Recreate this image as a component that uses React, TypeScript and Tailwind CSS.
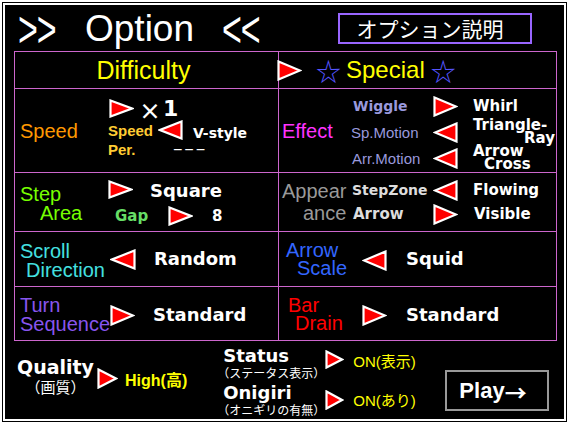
import React from "react";

const SANS = "font-['Liberation_Sans','Noto_Sans_CJK_JP',sans-serif]";
const BOLD = "font-['DejaVu_Sans','Noto_Sans_CJK_JP',sans-serif] font-bold";
const CJK = "font-['Noto_Sans_CJK_JP',sans-serif]";

function Tri({ dir = "r", w = 25, h = 21, className = "" }: { dir?: "r" | "l"; w?: number; h?: number; className?: string }) {
  const pts =
    dir === "r"
      ? `1.5,1.5 ${w - 2},${h / 2} 1.5,${h - 1.5}`
      : `${w - 1.5},1.5 2,${h / 2} ${w - 1.5},${h - 1.5}`;
  return (
    <svg width={w} height={h} viewBox={`0 0 ${w} ${h}`} className={`shrink-0 ${className}`}>
      <polygon points={pts} fill="#ff0000" stroke="#ffffff" strokeWidth="2.2" strokeLinejoin="miter" strokeMiterlimit={3} />
    </svg>
  );
}

export default function App() {
  return (
    <div className={`h-[425px] w-[569px] bg-white px-[2px] pb-[3px] pt-[2px] ${SANS}`}>
      <div className="h-full w-full bg-black p-px">
        <div className="flex h-full w-full flex-col border-2 border-white bg-black">
          {/* title row */}
          <div className="flex h-[46px] shrink-0 items-center pl-[13px]">
            <div className="flex h-[46px] w-[67px] items-center">
              <span className="inline-block origin-center scale-y-[1.55] text-[34px] leading-[30px] tracking-[-1px] text-white">&gt;&gt;</span>
            </div>
            <div className="w-[137px] text-[37px] leading-none text-white">Option</div>
            <div className="flex h-[46px] w-[116px] items-center">
              <span className="inline-block origin-center scale-y-[1.55] text-[34px] leading-[30px] tracking-[-1px] text-white">&lt;&lt;</span>
            </div>
            <div className={`flex h-[31px] w-[194px] items-center justify-center border-2 border-[#9966ff] pr-[10px] text-[21px] leading-none text-white ${CJK}`}>
              オプション説明
            </div>
          </div>

          {/* grid */}
          <div className="ml-[9px] flex h-[290px] w-[543px] shrink-0 flex-col border border-[#cc66cc]">
            {/* row 1 */}
            <div className="flex h-[37px] border-b border-[#cc66cc]">
              <div className="flex w-[264px] items-center justify-center border-r border-[#cc66cc] pr-[6px] text-[25px] leading-none text-[#ffff00]">
                Difficulty
              </div>
              <div className="flex flex-1 items-center">
                <Tri className="-ml-[2px]" />
                <span className={`ml-[14px] text-[25px] leading-none text-[#5555ff] ${CJK}`}>☆</span>
                <span className="ml-[5px] text-[24px] leading-none text-[#ffff00]">Special</span>
                <span className={`ml-[6px] text-[25px] leading-none text-[#5555ff] ${CJK}`}>☆</span>
              </div>
            </div>

            {/* row 2 */}
            <div className="flex h-[84px] border-b border-[#cc66cc]">
              <div className="flex w-[264px] border-r border-[#cc66cc]">
                <div className="w-[93px] self-center pl-[5px] text-[20px] leading-none text-[#ff9900]">Speed</div>
                <div className="flex flex-col pt-[8px]">
                  <div className="flex h-[23px] items-center">
                    <Tri className="ml-px" h={19} />
                    <span className={`ml-[5px] text-[22px] font-bold leading-none text-white ${CJK}`}>×</span>
                    <span className={`ml-[2px] text-[22px] leading-none text-white ${BOLD}`}>1</span>
                  </div>
                  <div className="flex h-[20px] items-center">
                    <span className="w-[50px] text-[15px] font-bold leading-none text-[#ffcc33]">Speed</span>
                    <Tri dir="l" h={20} />
                    <span className={`ml-[10px] mt-[5px] text-[14px] leading-none text-white ${BOLD}`}>V-style</span>
                  </div>
                  <div className="flex h-[19px] items-center">
                    <span className="w-[65px] text-[15px] font-bold leading-none text-[#ffcc33]">Per.</span>
                    <span className="text-[16px] leading-none tracking-[2px] text-white">−−−</span>
                  </div>
                </div>
              </div>
              <div className="flex flex-1">
                <div className="w-[73px] self-center pl-[3px] text-[20px] leading-none text-[#ff33ff]">Effect</div>
                <div className="flex flex-col pt-[4px]">
                  <div className="flex h-[26px] items-center">
                    <span className={`w-[81px] pl-px text-[14px] leading-none text-[#9999dd] ${BOLD}`}>Wiggle</span>
                    <Tri />
                    <span className={`ml-[15px] text-[15px] leading-none text-white ${BOLD}`}>Whirl</span>
                  </div>
                  <div className="flex h-[26px] items-center">
                    <span className="w-[81px] -ml-px text-[15px] leading-none text-[#9999dd]">Sp.Motion</span>
                    <Tri dir="l" className="ml-px" />
                    <div className={`ml-[15px] flex flex-col text-[15px] leading-[13px] text-white ${BOLD}`}>
                      <span>Triangle-</span>
                      <span className="pl-[51px]">Ray</span>
                    </div>
                  </div>
                  <div className="flex h-[26px] items-center">
                    <span className="w-[81px] text-[15px] leading-none text-[#9999dd]">Arr.Motion</span>
                    <Tri dir="l" />
                    <div className={`ml-[15px] flex flex-col text-[15px] leading-[13px] text-white ${BOLD}`}>
                      <span>Arrow</span>
                      <span className="pl-[11px]">Cross</span>
                    </div>
                  </div>
                </div>
              </div>
            </div>

            {/* row 3 */}
            <div className="flex h-[59px] border-b border-[#cc66cc]">
              <div className="flex w-[264px] border-r border-[#cc66cc]">
                <div className="mt-[4px] flex w-[93px] flex-col self-center pl-[5px] text-[20px] leading-[19px] text-[#77ff00]">
                  <span>Step</span>
                  <span className="pl-[20px]">Area</span>
                </div>
                <div className="flex flex-col pt-[6px]">
                  <div className="flex h-[24px] items-center">
                    <Tri h={19} className="-mt-[4px]" />
                    <span className={`ml-[17px] text-[18px] leading-none text-white ${BOLD}`}>Square</span>
                  </div>
                  <div className="flex h-[26px] items-center">
                    <span className={`ml-[7px] w-[53px] text-[15px] leading-none text-[#66dd66] ${BOLD}`}>Gap</span>
                    <Tri h={20} />
                    <span className={`ml-[19px] text-[15px] leading-none text-white ${BOLD}`}>8</span>
                  </div>
                </div>
              </div>
              <div className="flex flex-1">
                <div className="flex w-[73px] flex-col self-center pl-[3px] text-[20px] leading-[22px] text-[#999999]">
                  <span>Appear</span>
                  <span className="pl-[21px]">ance</span>
                </div>
                <div className="flex flex-col pt-[5px]">
                  <div className="flex h-[24px] items-center">
                    <span className={`w-[81px] text-[14px] leading-none text-[#dddddd] ${BOLD}`}>StepZone</span>
                    <Tri dir="l" />
                    <span className={`ml-[15px] text-[15px] leading-none text-white ${BOLD}`}>Flowing</span>
                  </div>
                  <div className="flex h-[24px] items-center">
                    <span className={`w-[81px] pl-px text-[15px] leading-none text-[#dddddd] ${BOLD}`}>Arrow</span>
                    <Tri />
                    <span className={`ml-[16px] text-[15px] leading-none text-white ${BOLD}`}>Visible</span>
                  </div>
                </div>
              </div>
            </div>

            {/* row 4 */}
            <div className="flex h-[55px] border-b border-[#cc66cc]">
              <div className="flex w-[264px] items-center border-r border-[#cc66cc]">
                <div className="mt-[4px] flex w-[95px] flex-col whitespace-nowrap pl-[5px] text-[20px] leading-[19px] text-[#44e0e0]">
                  <span>Scroll</span>
                  <span className="pl-[6px]">Direction</span>
                </div>
                <Tri dir="l" w={26} />
                <span className={`ml-[18px] text-[18px] leading-none text-white ${BOLD}`}>Random</span>
              </div>
              <div className="flex flex-1 items-center">
                <div className="flex w-[83px] flex-col pl-[7px] text-[20px] leading-[18px] text-[#3366ff]">
                  <span>Arrow</span>
                  <span className="pl-[11px]">Scale</span>
                </div>
                <Tri dir="l" className="mt-[2px]" />
                <span className={`ml-[19px] text-[18px] leading-none text-white ${BOLD}`}>Squid</span>
              </div>
            </div>

            {/* row 5 */}
            <div className="flex flex-1">
              <div className="flex w-[264px] items-center border-r border-[#cc66cc]">
                <div className="mt-[2px] flex w-[95px] flex-col whitespace-nowrap pl-[5px] text-[20px] leading-[19px] text-[#8855ee]">
                  <span>Turn</span>
                  <span>Sequence</span>
                </div>
                <Tri className="mt-[3px]" />
                <span className={`ml-[18px] mt-[2px] text-[18px] leading-none text-white ${BOLD}`}>Standard</span>
              </div>
              <div className="flex flex-1 items-center">
                <div className="flex w-[83px] flex-col pl-[9px] text-[20px] leading-[18px] text-[#ff0000]">
                  <span>Bar</span>
                  <span className="pl-[7px]">Drain</span>
                </div>
                <Tri className="mt-[3px]" />
                <span className={`ml-[19px] mt-[2px] text-[18px] leading-none text-white ${BOLD}`}>Standard</span>
              </div>
            </div>
          </div>

          {/* bottom area */}
          <div className="flex flex-1 items-start pl-[13px]">
            <div className="mt-[15px] flex w-[75px] flex-col items-center">
              <span className={`text-[19px] leading-[22px] text-white ${BOLD}`}>Quality</span>
              <span className={`text-[15px] leading-[18px] text-white ${CJK}`}>（画質）</span>
            </div>
            <Tri w={21} h={21} className="ml-[4px] mt-[27px]" />
            <span className={`ml-[7px] mt-[30px] text-[16px] font-bold leading-[20px] text-[#ffff00] ${SANS}`}>High(高)</span>

            <div className="ml-[36px] flex flex-col">
              <div className="mt-[5px] flex items-start">
                <div className="flex w-[102px] flex-col whitespace-nowrap">
                  <span className={`text-[18px] leading-[20px] text-white ${BOLD}`}>Status</span>
                  <span className={`-ml-[6px] text-[12px] leading-[14px] text-white ${CJK}`}>（ステータス表示）</span>
                </div>
                <Tri w={19} h={19} className="mt-[4px]" />
                <span className={`ml-[9px] mt-[6px] text-[15px] leading-[20px] text-[#ffff00] ${SANS}`}>ON(表示)</span>
              </div>
              <div className="mt-[3px] flex items-start">
                <div className="flex w-[102px] flex-col whitespace-nowrap">
                  <span className={`text-[18px] leading-[20px] text-white ${BOLD}`}>Onigiri</span>
                  <span className={`-ml-[6px] text-[12px] leading-[14px] text-white ${CJK}`}>（オニギリの有無）</span>
                </div>
                <Tri w={19} h={20} className="mt-[7px]" />
                <span className={`ml-[9px] mt-[8px] text-[15px] leading-[20px] text-[#ffff00] ${SANS}`}>ON(あり)</span>
              </div>
            </div>

            <div className="ml-auto mr-[15px] mt-[29px] flex h-[41px] w-[104px] items-center justify-center border-2 border-[#999999] pr-[8px]">
              <span className="text-[22px] font-bold leading-none text-white">Play</span>
              <span className={`text-[22px] font-bold leading-none text-white ${CJK}`}>→</span>
            </div>
          </div>
        </div>
      </div>
    </div>
  );
}
